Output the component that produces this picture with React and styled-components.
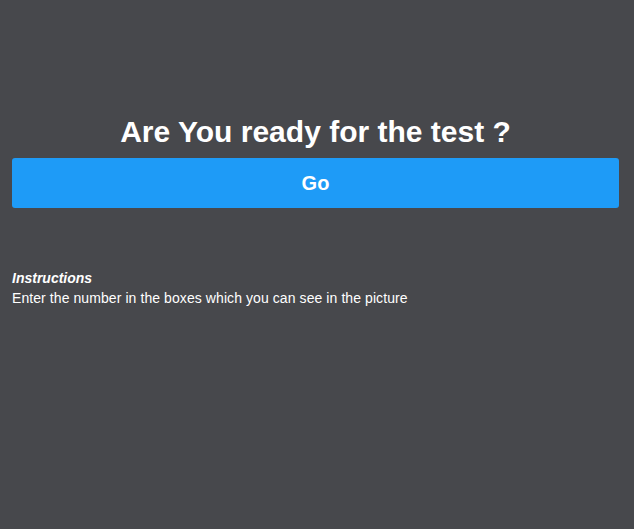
import React from "react";
import styled, { createGlobalStyle } from "styled-components";

const Global = createGlobalStyle`
  html, body { margin: 0; padding: 0; background: #47484c; }
  body { font-family: "Liberation Sans", Arial, sans-serif; color: #ffffff; }
`;

const Page = styled.div`
  min-height: 529px;
  padding: 116px 15px 0 12px;
  box-sizing: border-box;
  display: flex;
  flex-direction: column;
`;

const Title = styled.h1`
  margin: 0 0 10px;
  font-size: 30px;
  line-height: 32px;
  font-weight: bold;
  text-align: center;
`;

const GoButton = styled.button`
  height: 50px;
  border: none;
  border-radius: 3px;
  background: #1e9bf7;
  color: #ffffff;
  font-family: "Liberation Sans", Arial, sans-serif;
  font-size: 20px;
  font-weight: bold;
  cursor: pointer;
`;

const Instructions = styled.div`
  margin-top: 60px;
  font-size: 14px;
  line-height: 20px;
`;

const Heading = styled.div`
  font-weight: bold;
  font-style: italic;
`;

const Body = styled.div`
  letter-spacing: 0.08px;
`;

export default function App() {
  return (
    <>
      <Global />
      <Page>
        <Title>Are You ready for the test ?</Title>
        <GoButton>Go</GoButton>
        <Instructions>
          <Heading>Instructions</Heading>
          <Body>Enter the number in the boxes which you can see in the picture</Body>
        </Instructions>
      </Page>
    </>
  );
}
